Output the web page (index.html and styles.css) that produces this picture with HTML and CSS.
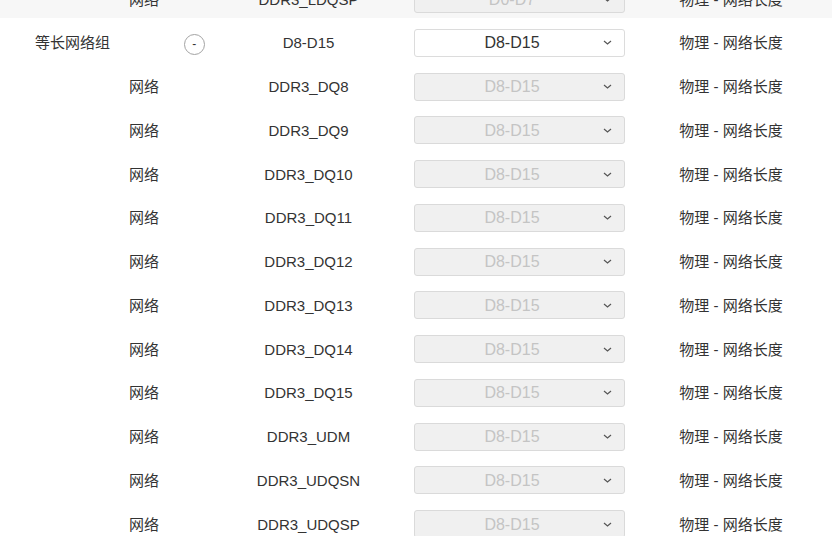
FILE: index.html
```html
<!DOCTYPE html>
<html lang="zh">
<head>
<meta charset="utf-8">
<title>等长网络组</title>
<link rel="stylesheet" href="styles.css">
</head>
<body>
<div class="list">
  <div class="row child hover">
    <div class="type">网络</div>
    <div class="name">DDR3_LDQSP</div>
    <div class="cell-select"><div class="select disabled"><span class="val">D0-D7</span><svg class="chev" width="9" height="5" viewBox="0 0 9 5"><path d="M1 1 L4.5 4 L8 1" /></svg></div></div>
    <div class="rule">物理 - 网络长度</div>
  </div>
  <div class="row group">
    <div class="type">等长网络组</div>
    <div class="ops"><button class="collapse">-</button></div>
    <div class="name">D8-D15</div>
    <div class="cell-select"><div class="select"><span class="val">D8-D15</span><svg class="chev" width="9" height="5" viewBox="0 0 9 5"><path d="M1 1 L4.5 4 L8 1" /></svg></div></div>
    <div class="rule">物理 - 网络长度</div>
  </div>
  <div class="row child">
    <div class="type">网络</div>
    <div class="name">DDR3_DQ8</div>
    <div class="cell-select"><div class="select disabled"><span class="val">D8-D15</span><svg class="chev" width="9" height="5" viewBox="0 0 9 5"><path d="M1 1 L4.5 4 L8 1" /></svg></div></div>
    <div class="rule">物理 - 网络长度</div>
  </div>
  <div class="row child">
    <div class="type">网络</div>
    <div class="name">DDR3_DQ9</div>
    <div class="cell-select"><div class="select disabled"><span class="val">D8-D15</span><svg class="chev" width="9" height="5" viewBox="0 0 9 5"><path d="M1 1 L4.5 4 L8 1" /></svg></div></div>
    <div class="rule">物理 - 网络长度</div>
  </div>
  <div class="row child">
    <div class="type">网络</div>
    <div class="name">DDR3_DQ10</div>
    <div class="cell-select"><div class="select disabled"><span class="val">D8-D15</span><svg class="chev" width="9" height="5" viewBox="0 0 9 5"><path d="M1 1 L4.5 4 L8 1" /></svg></div></div>
    <div class="rule">物理 - 网络长度</div>
  </div>
  <div class="row child">
    <div class="type">网络</div>
    <div class="name">DDR3_DQ11</div>
    <div class="cell-select"><div class="select disabled"><span class="val">D8-D15</span><svg class="chev" width="9" height="5" viewBox="0 0 9 5"><path d="M1 1 L4.5 4 L8 1" /></svg></div></div>
    <div class="rule">物理 - 网络长度</div>
  </div>
  <div class="row child">
    <div class="type">网络</div>
    <div class="name">DDR3_DQ12</div>
    <div class="cell-select"><div class="select disabled"><span class="val">D8-D15</span><svg class="chev" width="9" height="5" viewBox="0 0 9 5"><path d="M1 1 L4.5 4 L8 1" /></svg></div></div>
    <div class="rule">物理 - 网络长度</div>
  </div>
  <div class="row child">
    <div class="type">网络</div>
    <div class="name">DDR3_DQ13</div>
    <div class="cell-select"><div class="select disabled"><span class="val">D8-D15</span><svg class="chev" width="9" height="5" viewBox="0 0 9 5"><path d="M1 1 L4.5 4 L8 1" /></svg></div></div>
    <div class="rule">物理 - 网络长度</div>
  </div>
  <div class="row child">
    <div class="type">网络</div>
    <div class="name">DDR3_DQ14</div>
    <div class="cell-select"><div class="select disabled"><span class="val">D8-D15</span><svg class="chev" width="9" height="5" viewBox="0 0 9 5"><path d="M1 1 L4.5 4 L8 1" /></svg></div></div>
    <div class="rule">物理 - 网络长度</div>
  </div>
  <div class="row child">
    <div class="type">网络</div>
    <div class="name">DDR3_DQ15</div>
    <div class="cell-select"><div class="select disabled"><span class="val">D8-D15</span><svg class="chev" width="9" height="5" viewBox="0 0 9 5"><path d="M1 1 L4.5 4 L8 1" /></svg></div></div>
    <div class="rule">物理 - 网络长度</div>
  </div>
  <div class="row child">
    <div class="type">网络</div>
    <div class="name">DDR3_UDM</div>
    <div class="cell-select"><div class="select disabled"><span class="val">D8-D15</span><svg class="chev" width="9" height="5" viewBox="0 0 9 5"><path d="M1 1 L4.5 4 L8 1" /></svg></div></div>
    <div class="rule">物理 - 网络长度</div>
  </div>
  <div class="row child">
    <div class="type">网络</div>
    <div class="name">DDR3_UDQSN</div>
    <div class="cell-select"><div class="select disabled"><span class="val">D8-D15</span><svg class="chev" width="9" height="5" viewBox="0 0 9 5"><path d="M1 1 L4.5 4 L8 1" /></svg></div></div>
    <div class="rule">物理 - 网络长度</div>
  </div>
  <div class="row child">
    <div class="type">网络</div>
    <div class="name">DDR3_UDQSP</div>
    <div class="cell-select"><div class="select disabled"><span class="val">D8-D15</span><svg class="chev" width="9" height="5" viewBox="0 0 9 5"><path d="M1 1 L4.5 4 L8 1" /></svg></div></div>
    <div class="rule">物理 - 网络长度</div>
  </div>
</div>
</body>
</html>
```

FILE: styles.css
```css
html, body {
  margin: 0;
  padding: 0;
  background: #ffffff;
  overflow: hidden;
}

body {
  font-family: "Liberation Sans", "Noto Sans CJK SC", sans-serif;
  font-size: 15px;
  color: #333333;
  width: 832px;
  height: 536px;
}

.list {
  margin-top: -25.4px;
}

.row {
  display: grid;
  grid-template-columns: 145px 98.6px 129.8px 292.2px 130.8px;
  align-items: center;
  height: 43.75px;
  box-sizing: border-box;
  padding-top: 10.6px;
  padding-bottom: 5.15px;
  line-height: 20px;
  white-space: nowrap;
}

.row.hover {
  background: #f7f7f7;
}

.type,
.name,
.rule,
.ops {
  text-align: center;
  padding-top: 1px;
}

.child .type {
  grid-column: 1 / 3;
  text-align: left;
  padding-left: 129px;
}

.name {
  grid-column: 3;
}

.cell-select {
  grid-column: 4;
  display: flex;
  justify-content: center;
}

.rule {
  grid-column: 5;
}

.ops {
  display: flex;
  justify-content: center;
  align-items: center;
  padding-top: 4px;
}

.collapse {
  width: 21px;
  height: 21px;
  border-radius: 50%;
  border: 1px solid #a3a3a3;
  background: #ffffff;
  color: #333333;
  font-family: "Liberation Sans", sans-serif;
  font-size: 12px;
  line-height: 17px;
  padding: 0;
  text-align: center;
  cursor: pointer;
}

.select {
  width: 211px;
  height: 28px;
  box-sizing: border-box;
  border: 1px solid #dcdcdc;
  border-radius: 3px;
  background: #ffffff;
  display: flex;
  align-items: center;
  padding-left: 6px;
}

.select .val {
  flex: 1;
  text-align: center;
  color: #333333;
  font-size: 16px;
  padding-top: 1px;
}

.select.disabled {
  background: #f0f0f0;
  border-color: #dadada;
}

.select.disabled .val {
  color: #c4c4c4;
}

.chev {
  margin-right: 12px;
  flex: none;
}

.chev path {
  fill: none;
  stroke: #555555;
  stroke-width: 1.2;
}
```
